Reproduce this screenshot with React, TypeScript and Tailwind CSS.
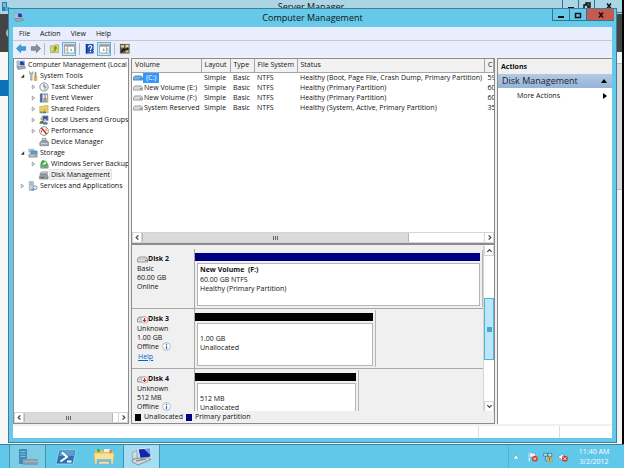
import type { ReactNode } from "react";

type IconName =
  | "computer"
  | "tools"
  | "clock"
  | "events"
  | "share"
  | "users"
  | "perf"
  | "device"
  | "storage"
  | "backup"
  | "disk"
  | "services";

const TREE: { label: string; icon: IconName; level: number; state?: "open" | "closed"; selected?: boolean }[] = [
  { label: "Computer Management (Local", icon: "computer", level: 0 },
  { label: "System Tools", icon: "tools", level: 1, state: "open" },
  { label: "Task Scheduler", icon: "clock", level: 2, state: "closed" },
  { label: "Event Viewer", icon: "events", level: 2, state: "closed" },
  { label: "Shared Folders", icon: "share", level: 2, state: "closed" },
  { label: "Local Users and Groups", icon: "users", level: 2, state: "closed" },
  { label: "Performance", icon: "perf", level: 2, state: "closed" },
  { label: "Device Manager", icon: "device", level: 2 },
  { label: "Storage", icon: "storage", level: 1, state: "open" },
  { label: "Windows Server Backup", icon: "backup", level: 2, state: "closed" },
  { label: "Disk Management", icon: "disk", level: 2, selected: true },
  { label: "Services and Applications", icon: "services", level: 1, state: "closed" },
];

const VOLUMES = [
  { name: "(C:)", status: "Healthy (Boot, Page File, Crash Dump, Primary Partition)", capacity: "59", selected: true },
  { name: "New Volume (E:)", status: "Healthy (Primary Partition)", capacity: "60" },
  { name: "New Volume (F:)", status: "Healthy (Primary Partition)", capacity: "60" },
  { name: "System Reserved", status: "Healthy (System, Active, Primary Partition)", capacity: "35" },
];

const DISKS = [
  {
    name: "Disk 2",
    kind: "Basic",
    size: "60.00 GB",
    online: true,
    width: 100,
    volume: "New Volume  (F:)",
    lines: ["60.00 GB NTFS", "Healthy (Primary Partition)"],
  },
  {
    name: "Disk 3",
    kind: "Unknown",
    size: "1.00 GB",
    online: false,
    help: true,
    width: 63,
    lines: ["1.00 GB", "Unallocated"],
  },
  { name: "Disk 4", kind: "Unknown", size: "512 MB", online: false, width: 57, lines: ["512 MB", "Unallocated"] },
];

export default function App() {
  return (
    <div className="flex h-screen flex-col overflow-hidden bg-black font-['Open_Sans','Noto_Sans',sans-serif] text-[7px] leading-[10px] text-[#111]">
      <main className="relative flex min-h-0 flex-1">
        <ServerManager />
        <ManagementWindow />
      </main>
      <Taskbar />
    </div>
  );
}

function ServerManager() {
  return (
    <div className="absolute inset-y-0 right-[2px] left-0 flex flex-col bg-[#f7f7f7]">
      <div className="flex h-[14px] shrink-0 items-start bg-[#abd5e5]">
        <div className="w-[120px] pt-[2px] pl-[2px]">
          <svg viewBox="0 0 8 9" className="h-[9px] w-2">
            <path d="M0 0h5v9H0z" fill="#2180b3" />
            <path d="M1 2h3M1 4h3" stroke="#d9f2fb" />
            <path d="M3 5h5v4H3z" fill="#4da8ce" />
          </svg>
        </div>
        <div className="flex-1 text-center text-[9px] leading-[14px]">Server Manager</div>
        <div className="flex w-[120px] justify-end">
          <WindowButtons className="h-[13px] w-4" closeClass="h-[13px] w-7" restore />
        </div>
      </div>
      <div className="flex h-[38px] shrink-0 items-center bg-[#444]">
        <span className="ml-[6px] h-[10px] w-[10px] rounded-full border-2 border-[#b6b6b6]" />
      </div>
      <div className="flex flex-1 justify-between">
        <div className="mt-7 h-4 w-2 bg-[#0b70b7]" />
        <div className="w-[5px] bg-[#f4f4f4] pt-[11px]">
          <div className="h-[127px] border-y border-[#b8b8b8] bg-[#dadada]" />
        </div>
      </div>
    </div>
  );
}

function WindowButtons({ className, closeClass, restore }: { className: string; closeClass: string; restore?: boolean }) {
  const edge = "flex items-center justify-center border-b border-l border-[#35748c]";
  return (
    <>
      <button aria-label="Minimize" className={`${edge} ${className}`}>
        <svg viewBox="0 0 8 8" className="h-2 w-2">
          <path d="M1 5h6v2H1z" fill="#111" />
        </svg>
      </button>
      <button aria-label="Maximize" className={`${edge} ${className}`}>
        <svg viewBox="0 0 8 8" className="h-2 w-2" fill="none" stroke="#111" strokeWidth="1.500">
          {restore && <path d="M3 3V1h4v4H5" />}
          <path d={restore ? "M1 3h4v4H1z" : "M1.500 2.500h5v4h-5z"} />
        </svg>
      </button>
      <button
        aria-label="Close"
        className={`${edge} ${closeClass} ${restore ? "" : "bg-[#c7594f]"}`}
      >
        <svg viewBox="0 0 8 8" className="h-2 w-2" stroke="#111" strokeWidth="1.500">
          <path d="M2 1.500 6 6.500M6 1.500 2 6.500" />
        </svg>
      </button>
    </>
  );
}

function ManagementWindow() {
  return (
    <section className="relative mt-2 mr-[7px] mb-px ml-2 flex min-w-0 flex-1 flex-col border border-[#3d7f98] bg-[#66c9ea]">
      <header className="flex h-[18px] shrink-0 items-start">
        <div className="w-[72px] pt-[3px] pl-[5px]">
          <TreeIcon name="computer" />
        </div>
        <h1 className="flex-1 text-center text-[9px] leading-[17px] text-[#111]">Computer Management</h1>
        <div className="mr-[2px] flex w-[70px] justify-end">
          <WindowButtons className="h-3 w-[17px]" closeClass="h-3 w-7" />
        </div>
      </header>
      <div className="mx-1 mb-1 flex min-h-0 flex-1 flex-col bg-[#f0f0f0]">
        <nav className="flex h-[13px] shrink-0 items-center gap-[10px] bg-[#e8eefe] px-[6px]">
          {["File", "Action", "View", "Help"].map((item) => (
            <button key={item}>{item}</button>
          ))}
        </nav>
        <Toolbar />
        <div className="mt-[2px] flex min-h-0 flex-1 gap-[2px]">
          <TreePane />
          <div className="flex min-w-0 flex-1 flex-col border border-[#8c8c8c]">
            <VolumeList />
            <DiskView />
            <Legend />
          </div>
          <ActionsPane />
        </div>
        <footer className="mt-[2px] flex h-3 shrink-0 bg-white">
          <div className="flex-1" />
          <div className="w-[81px] border-l border-[#ddd]" />
          <div className="w-[53px] border-l border-[#ddd]" />
        </footer>
      </div>
    </section>
  );
}

function Toolbar() {
  return (
    <div className="flex h-[16px] shrink-0 items-center gap-[2px] border-t border-[#c9c9c9] bg-[#e8eefe] pl-[2px]">
      <ToolButton label="Back">
        <path d="M0.5 6 5 1.500V4h5.500v4H5v2.500z" fill="#3ba0db" stroke="#2b7cb4" strokeWidth=".7" />
      </ToolButton>
      <ToolButton label="Forward">
        <path d="M11.500 6 7 1.500V4H1.500v4H7v2.500z" fill="#8f8f8f" stroke="#6d6d6d" strokeWidth=".7" />
      </ToolButton>
      <Divider />
      <ToolButton label="Up one level">
        <path d="M1.500 3h3.500l1-1h4.500v8.500h-9z" fill="#e6cf72" stroke="#a88f3e" strokeWidth=".6" />
        <path d="M3 9c2.500 0 3-1 3-3H4.500L7 3l2.500 3H8c0 3-2 4-5 3z" fill="#43b02f" />
      </ToolButton>
      <ToolButton label="Show console tree" pressed>
        <PanelGlyph flip={false} />
      </ToolButton>
      <Divider />
      <ToolButton label="Help topics">
        <path d="M2 1h8.500v10.500H2z" fill="#2f58bd" />
        <path d="M2 1h1.500v10.500H2z" fill="#16347f" />
        <path d="M5 4.500c0-2.500 3.500-2.300 3.500-.2C8.500 5.800 7 5.700 7 7.500" fill="none" stroke="#fff" strokeWidth="1.200" />
        <path d="M6.300 8.600h1.400V10H6.300z" fill="#fff" />
      </ToolButton>
      <ToolButton label="Show action pane" pressed>
        <PanelGlyph flip />
      </ToolButton>
      <Divider />
      <ToolButton label="Disk settings">
        <path d="M1 1h10.500v10.500H1z" fill="#5e5a4d" />
        <path d="M2 2.500h3.500V5H2zM7 2h3.500v3H7z" fill="#e5d9a0" />
        <path d="M2.500 10 5 6.500l1.500 1.500L10 5.500" fill="none" stroke="#111" strokeWidth="1.500" />
        <path d="M7 8h3.500v2.500H7z" fill="#d5b65c" />
      </ToolButton>
    </div>
  );
}

function ToolButton({ label, pressed, children }: { label: string; pressed?: boolean; children: ReactNode }) {
  return (
    <button
      aria-label={label}
      className={`flex h-[14px] items-center justify-center ${pressed ? "w-[14px] border border-[#6aaed2] bg-[#d5e9f8]" : "w-3"}`}
    >
      <svg viewBox="0 0 12 12" className="h-[11px] w-[11px]">
        {children}
      </svg>
    </button>
  );
}

function PanelGlyph({ flip }: { flip: boolean }) {
  return (
    <g>
      <path d="M.5 1.500h11v9.500H.5z" fill="#fff" stroke="#8b8b8b" strokeWidth=".8" />
      <path d="M1 2h10v2H1z" fill="#9a9a9a" />
      <path d={flip ? "M8 4v7" : "M4 4v7"} stroke="#8b8b8b" strokeWidth=".8" />
      <path d={flip ? "M8.500 6.500h2M8.500 8.500h2" : "M1.500 6.500h2M1.500 8.500h2"} stroke="#999" strokeWidth=".8" />
      <path d={flip ? "M4.500 6v3L6.500 7.500z" : "M8.500 6v3L6.500 7.500z"} fill="#4ba855" />
    </g>
  );
}

function Divider() {
  return <span className="mx-px h-3 w-px bg-[#b5b9c4]" />;
}

function TreePane() {
  return (
    <aside className="flex w-[116px] shrink-0 flex-col border border-[#8c8c8c] bg-white">
      <ul className="flex-1 overflow-hidden">
        {TREE.map((node) => (
          <li key={node.label} className={node.level === 2 ? "pl-[17px]" : node.level === 1 ? "pl-[6px]" : "pl-[2px]"}>
            <button className="flex h-[11px] items-center whitespace-nowrap">
              {node.level > 0 && <Twisty state={node.state} />}
              <TreeIcon name={node.icon} />
              <span className={node.selected ? "border border-[#e4e4e4] bg-[#f1f1f1] px-px leading-[9px]" : "ml-[2px]"}>
                {node.label}
              </span>
            </button>
          </li>
        ))}
      </ul>
      <HorizontalScrollbar thumbClass="w-[89px]" />
    </aside>
  );
}

function Twisty({ state }: { state?: "open" | "closed" }) {
  return (
    <svg viewBox="0 0 6 6" className="mr-[3px] h-[6px] w-[5px]">
      {state === "open" && <path d="M5 1v4H1z" fill="#333" />}
      {state === "closed" && <path d="M1.500 .8v4.400L4.500 3z" fill="#fff" stroke="#777" strokeWidth=".8" />}
    </svg>
  );
}

function TreeIcon({ name }: { name: IconName }) {
  return (
    <svg viewBox="0 0 12 12" className="h-[10px] w-[10px] shrink-0">
      {ICONS[name]}
    </svg>
  );
}

const ICONS: Record<IconName, ReactNode> = {
  computer: (
    <>
      <path d="M1 1h3v7H1z" fill="#b8c0c8" stroke="#808a94" strokeWidth=".5" />
      <path d="M4 1.500 10 .8l.8 5.500-6 .7z" fill="#1c3fb5" stroke="#d5dce3" strokeWidth=".8" />
      <path d="m8 1.200 2 3.800.5-4z" fill="#7ea6ee" />
      <path d="M1 8.500 10 7l1.500 3-9 1.500z" fill="#a2abb3" stroke="#68737d" strokeWidth=".6" />
    </>
  ),
  tools: (
    <>
      <path d="M2 .5v3l1 1.200V11h2V4.700L6 3.500v-3L4.800 2.500H3.200z" fill="#b7bdc2" stroke="#767d83" strokeWidth=".5" />
      <path d="M8 1h2v5H8z" fill="#8d9398" />
      <path d="M7.500 6h3v5.500h-3z" fill="#e3b53c" stroke="#a8801c" strokeWidth=".5" />
    </>
  ),
  clock: (
    <>
      <circle cx="6" cy="6" r="5" fill="#f2f5f8" stroke="#8d949b" strokeWidth="1.200" />
      <path d="M6 6v4a4 4 0 0 0 3.500-2z" fill="#e7c887" />
      <path d="M6 2.500V6h3" fill="none" stroke="#36517c" />
    </>
  ),
  events: (
    <>
      <path d="M1.500 1h9v10h-9z" fill="#8fb1d6" stroke="#50729a" strokeWidth=".6" />
      <path d="M1.500 1h2v10h-2z" fill="#4a688f" />
      <path d="M5 2.500h4.500V6H5z" fill="#fff" />
      <path d="M7.300 2.500v4M7.300 7.500v1.500" stroke="#d33a2c" strokeWidth="1.200" />
      <path d="M9 7h2v3H8z" fill="#e9b62e" />
    </>
  ),
  share: (
    <>
      <path d="M.8 3H5l1-1.200h5v8.700H.8z" fill="#ebcc61" stroke="#b29433" strokeWidth=".5" />
      <path d="M4.500 11c0-3 4-3 4 0z" fill="#3f79bd" />
      <circle cx="6.500" cy="7" r="1.400" fill="#dfaa77" />
      <path d="M1 11c0-3 3-3 3.500 0z" fill="#57a74e" />
    </>
  ),
  users: (
    <>
      <path d="M4 1h7v6H4z" fill="#2a56b4" stroke="#a9b4c0" strokeWidth=".8" />
      <path d="M4 9h7v2H4z" fill="#9da7b0" />
      <circle cx="3.500" cy="4.500" r="1.800" fill="#d69c66" />
      <path d="M.5 10.500c0-5 6-5 6 0z" fill="#3f8a4b" />
      <circle cx="7.500" cy="6" r="1.500" fill="#e5b27f" />
      <path d="M5 11.500c0-4.500 5-4.500 5 0z" fill="#5b79a8" />
    </>
  ),
  perf: (
    <>
      <circle cx="6" cy="6" r="5.200" fill="#fff" stroke="#6e6e6e" strokeWidth=".9" />
      <path d="m3 2.500 6 7" stroke="#d4251c" strokeWidth="1.800" />
      <path d="M3 8V5M8.500 3v3" stroke="#d4251c" strokeWidth=".9" />
    </>
  ),
  device: (
    <>
      <path d="M4 1.500h4.500v3H4z" fill="#b6cbe0" stroke="#657b91" strokeWidth=".6" />
      <path d="M1 6.500 3 4.500h7l1.500 2v4H1z" fill="#9ba3aa" stroke="#626a71" strokeWidth=".6" />
      <path d="M2 8h8" stroke="#dfe4e8" />
    </>
  ),
  storage: (
    <>
      <path d="M1 1.500h6V5H1z" fill="#b7d0e6" stroke="#6e8396" strokeWidth=".6" />
      <path d="M3.500 3.500h7.500v3.500H3.500z" fill="#5e9fcf" stroke="#46708f" strokeWidth=".6" />
      <path d="M1 7.500h10v3.500H1z" fill="#b8bdc1" stroke="#6a7075" strokeWidth=".6" />
      <path d="M8.500 9.300H10" stroke="#36b638" />
    </>
  ),
  backup: (
    <>
      <path d="M2 7h9v4H2z" fill="#a3a9ae" stroke="#656b70" strokeWidth=".6" />
      <path d="M5 10C1 8 1 4 4 2.500L3.500 1 7.500 2.500 5 6V4.500C3.500 6 4 8 5 10z" fill="#2fae33" />
      <path d="M7 2c4 2 4 5 1.500 7l.5 1.500L5.500 9 8 6v1.500C9 6 8.500 4 7 2z" fill="#48c73d" stroke="#1f7f24" strokeWidth=".3" />
    </>
  ),
  disk: (
    <>
      <path d="M1 4 3 2h8L9.500 4z" fill="#cfd3d6" stroke="#777" strokeWidth=".5" />
      <path d="M1 4h9.500v2.500H1z" fill="#8b9196" />
      <path d="M.8 7h10v3.800H.8z" fill="#a9afb4" stroke="#4d5256" strokeWidth=".7" />
      <path d="M2 9h5" stroke="#4d5256" />
      <path d="M8.500 9H10" stroke="#39c03a" />
    </>
  ),
  services: (
    <>
      <path d="M1.500 .8h5V11h-5z" fill="#c5d1dc" stroke="#7a8a99" strokeWidth=".6" />
      <path d="M2.500 2.500h3M2.500 4.500h3" stroke="#7a8a99" strokeWidth=".7" />
      <circle cx="8.500" cy="8" r="2.300" fill="#e8eef4" stroke="#5f8fbb" strokeWidth="1.100" />
      <path d="M4 9.500h3v2H4z" fill="#5f8fbb" />
    </>
  ),
};

function HorizontalScrollbar({ thumbClass }: { thumbClass: string }) {
  return (
    <div className="flex h-[11px] shrink-0 border-y border-[#d5d5d5] bg-white">
      <ScrollArrow label="Scroll left" d="M5 1.500 2.500 4 5 6.500" />
      <div className="flex min-w-0 flex-1">
        <div className={`flex items-center justify-center gap-px border-x border-[#b8b8b8] bg-[#dadada] ${thumbClass}`}>
          <span className="h-1 w-px bg-[#666]" />
          <span className="h-1 w-px bg-[#666]" />
          <span className="h-1 w-px bg-[#666]" />
        </div>
      </div>
      <ScrollArrow label="Scroll right" d="M3 1.500 5.500 4 3 6.500" />
    </div>
  );
}

function ScrollArrow({ label, d }: { label: string; d: string }) {
  return (
    <button aria-label={label} className="flex h-[9px] w-[10px] shrink-0 items-center justify-center border-x border-[#d5d5d5] bg-white">
      <svg viewBox="0 0 8 8" className="h-[7px] w-[7px] shrink-0" fill="none" stroke="#444" strokeWidth="1.400">
        <path d={d} />
      </svg>
    </button>
  );
}

function VolumeList() {
  return (
    <div className="flex h-[184px] shrink-0 flex-col bg-white">
      <div className="flex-1 overflow-hidden">
        <table className="w-full table-fixed border-collapse text-left whitespace-nowrap">
          <thead>
            <tr className="h-[13px] border-b border-[#a5a5a5] bg-[#f2f2f2]">
              <HeaderCell className="w-[69px]">Volume</HeaderCell>
              <HeaderCell className="w-[29px]">Layout</HeaderCell>
              <HeaderCell className="w-6">Type</HeaderCell>
              <HeaderCell className="w-[43px]">File System</HeaderCell>
              <HeaderCell>Status</HeaderCell>
              <HeaderCell className="w-[9px]">C</HeaderCell>
            </tr>
          </thead>
          <tbody>
            {VOLUMES.map((volume) => (
              <tr key={volume.name} className="h-[10px]">
                <td className="overflow-hidden p-0">
                  <div className="flex items-center">
                    <DriveGlyph selected={volume.selected} />
                    <span className={volume.selected ? "bg-[#3298fd] px-[3px] text-white" : "pl-px"}>{volume.name}</span>
                  </div>
                </td>
                <td className="p-0 pl-[3px]">Simple</td>
                <td className="p-0 pl-[3px]">Basic</td>
                <td className="p-0 pl-[3px]">NTFS</td>
                <td className="overflow-hidden p-0 pl-[3px]">{volume.status}</td>
                <td className="overflow-hidden p-0 pl-[3px]">{volume.capacity}</td>
              </tr>
            ))}
          </tbody>
        </table>
      </div>
      <HorizontalScrollbar thumbClass="w-[78%]" />
    </div>
  );
}

function HeaderCell({ className = "", children }: { className?: string; children: ReactNode }) {
  return (
    <th className={`overflow-hidden border-r border-[#a5a5a5] p-0 pl-[3px] font-normal ${className}`}>{children}</th>
  );
}

function DriveGlyph({ selected }: { selected?: boolean }) {
  return (
    <svg viewBox="0 0 11 6" className="ml-px h-[6px] w-[10px] shrink-0">
      <path d="M.5 2.500 2 .7h7L10.500 2.500v2.800H.5z" fill={selected ? "#6fb1e3" : "#d9d9d9"} stroke={selected ? "#3578ae" : "#858585"} strokeWidth=".8" />
      <path d="M7.500 3.800h2" stroke="#2c7a38" />
    </svg>
  );
}

function DiskView() {
  return (
    <div className="flex min-h-0 flex-1 border-t-2 border-[#8c8c8c] bg-[#f0f0f0]">
      <div className="min-w-0 flex-1 overflow-hidden pt-1">
        {DISKS.map((disk) => (
          <DiskRow key={disk.name} disk={disk} />
        ))}
      </div>
      <div className="flex w-[11px] shrink-0 flex-col items-center border-l border-[#d5d5d5] bg-white pt-px">
        <ScrollArrow label="Scroll up" d="M1.500 5.500 4 3l2.500 2.500" />
        <div className="flex w-full flex-1 flex-col border-y border-[#d5d5d5] pt-[42px]">
          <div className="flex h-[62px] items-center justify-center border border-[#4fb4d8] bg-[#bde6fd]">
            <span className="h-[5px] w-[5px] bg-[#45a9cc]" />
          </div>
        </div>
        <ScrollArrow label="Scroll down" d="M1.500 2.500 4 5l2.500-2.500" />
      </div>
    </div>
  );
}

function DiskRow({ disk }: { disk: (typeof DISKS)[number] }) {
  return (
    <div className="flex h-[60px] border-b border-[#a8a8a8]">
      <div className="w-[63px] shrink-0 border-r border-[#a8a8a8] pt-[5px] pl-[5px] leading-[9px]">
        <div className="flex items-center leading-[10px] font-bold">
          <DiskGlyph offline={!disk.online} />
          {disk.name}
        </div>
        <div>{disk.kind}</div>
        <div>{disk.size}</div>
        <div className="flex items-center gap-[3px]">
          {disk.online ? "Online" : "Offline"}
          {!disk.online && (
            <svg viewBox="0 0 10 10" className="h-[9px] w-[9px]">
              <circle cx="5" cy="5" r="4.300" fill="#fff" stroke="#a5a5a5" strokeWidth=".8" />
              <path d="M5 2v1.300M5 4.300V8" stroke="#2277c9" strokeWidth="1.400" />
            </svg>
          )}
        </div>
        {disk.help && (
          <a href="#help" className="ml-px leading-[12px] text-[#0066cc] underline">
            Help
          </a>
        )}
      </div>
      <div className="min-w-0 flex-1 py-px">
        <div className="flex h-full flex-col border-r border-[#b5b5b5] pt-[3px] pr-[2px]" style={{ width: `${disk.width}%` }}>
          <div className={`h-2 shrink-0 ${disk.online ? "bg-[#000082]" : "bg-black"}`} />
          <div
            className={`mt-[2px] mb-px ml-[2px] flex-1 border border-[#b5b5b5] bg-white pl-[2px] leading-[9px] ${disk.online ? "pt-px" : "pt-[10px]"}`}
          >
            {disk.volume && <div className="leading-[10px] font-bold whitespace-pre">{disk.volume}</div>}
            {disk.lines.map((line) => (
              <div key={line}>{line}</div>
            ))}
          </div>
        </div>
      </div>
    </div>
  );
}

function DiskGlyph({ offline }: { offline: boolean }) {
  return (
    <svg viewBox="0 0 11 9" className="h-[9px] w-[11px] shrink-0">
      <path d="M.5 4 2 2h7l1.500 2v3H.5z" fill="#e0e0e0" stroke="#777" strokeWidth=".7" />
      <path d="M.5 4h10" stroke="#999" strokeWidth=".5" />
      {offline ? (
        <>
          <circle cx="7.500" cy="5" r="3.200" fill="#fff" stroke="#999" strokeWidth=".6" />
          <path d="M7.500 3v3M6 5l1.500 1.500L9 5" fill="none" stroke="#d42020" strokeWidth="1.100" />
        </>
      ) : (
        <path d="M8 5.500h1.500" stroke="#27a23a" />
      )}
    </svg>
  );
}

function Legend() {
  return (
    <div className="flex h-3 shrink-0 items-center gap-[3px] bg-[#f0f0f0] pl-[3px]">
      <span className="h-[7px] w-[6px] bg-black" />
      Unallocated
      <span className="h-[7px] w-[6px] bg-[#000082]" />
      Primary partition
    </div>
  );
}

function ActionsPane() {
  return (
    <aside className="flex w-[115px] shrink-0 flex-col border-t border-l border-[#8c8c8c] bg-white">
      <h2 className="h-[15px] bg-[#f0f0f0] pl-[3px] leading-[15px] font-bold">Actions</h2>
      <button className="flex h-[14px] items-center justify-between bg-linear-to-b from-[#b3cae3] to-[#94b3d6] pr-[5px] pl-[4px] text-[9px] text-[#223]">
        Disk Management
        <svg viewBox="0 0 6 4" className="h-1 w-[6px]">
          <path d="M0 4h6L3 0z" />
        </svg>
      </button>
      <button className="flex h-[15px] items-center justify-between pr-[5px] pl-[19px]">
        More Actions
        <svg viewBox="0 0 4 6" className="h-[6px] w-1">
          <path d="M0 0v6l4-3z" />
        </svg>
      </button>
    </aside>
  );
}

function Taskbar() {
  return (
    <footer className="flex h-6 shrink-0 border-t border-[#3d7f98] bg-[#62c8ea] pl-[9px]">
      <TaskButton label="Server Manager" className="border-x border-[#4593ae] bg-[#7dcde6]">
        <path d="M3 2h8v15H3z" fill="#3f8cb8" />
        <path d="M4.500 4.500h5M4.500 7h5M4.500 9.500h5" stroke="#7fc0dc" />
        <path d="M7 12h15v6H7z" fill="#84a0ad" />
        <path d="M12 12v-2h5v2M7 14.500h15" fill="none" stroke="#a0bac6" />
      </TaskButton>
      <TaskButton label="PowerShell" className="">
        <path d="M5 3h17l-3 14H2z" fill="#2d73ad" stroke="#a9d8ef" strokeWidth=".8" />
        <path d="M6 4h15l-1 5H5z" fill="#5c9bcb" />
        <path d="m8 5.500 5 4.500-6.500 4.500M13 14.500h4.500" fill="none" stroke="#fff" strokeWidth="1.900" />
      </TaskButton>
      <TaskButton label="File Explorer" className="">
        <path d="M3 3h7l1.500 1.500H21V16H3z" fill="#e9c25c" />
        <path d="M5 2h3v3H5z" fill="#4caf50" />
        <path d="M12 2h6v3h-6z" fill="#f5f0dc" />
        <path d="M17.500 3h2v3h-2z" fill="#e0694a" />
        <path d="M2 6h20l-1 11H3z" fill="#f7e196" stroke="#d6b458" strokeWidth=".6" />
        <path d="M6 18v-4.500h12V18" fill="none" stroke="#71b7de" strokeWidth="2.500" />
      </TaskButton>
      <TaskButton label="Computer Management" className="border-x border-[#4593ae] bg-[#a5ddf2]">
        <path d="M2 6 7 3v9l-4 1z" fill="#d5dbe0" stroke="#7f8a94" strokeWidth=".6" />
        <path d="m8 2 12-1 1 9-11 1.500z" fill="#1026ad" stroke="#dfe5ea" strokeWidth="1.200" />
        <path d="m14 2 6-.5.7 7z" fill="#6f9cf0" />
        <path d="M3 12 18 10.500l3 2-13 5.500-6-3z" fill="#cfd5da" stroke="#6d7780" strokeWidth=".7" />
        <path d="m6 14 10-2" stroke="#6d7780" />
      </TaskButton>
      <div className="flex-1" />
      <div className="flex items-center gap-[5px] border-l border-[#53b3d3] pl-1 text-white">
        <svg viewBox="0 0 6 4" className="mr-1 h-1 w-[6px]">
          <path d="M0 4h6L3 0z" fill="#fff" stroke="#47859c" strokeWidth=".5" />
        </svg>
        <TrayIcon>
          <path d="M1.500 1v10" stroke="#fff" strokeWidth="1.300" />
          <path d="M2 1.500c3-1.500 4 1 7 0v5c-3 1-4-1.500-7 0z" fill="#e9f6fc" stroke="#47859c" strokeWidth=".5" />
          <RedCross />
        </TrayIcon>
        <TrayIcon>
          <path d="M.8 1.500h4.500v3.500H.8zM6 1.500h4.500v4H6zM3 5v5h3" fill="#bfe3f3" stroke="#356f87" strokeWidth=".9" />
          <path d="m8 4.500 3.800 7H4.200z" fill="#f7c83a" stroke="#9b7815" strokeWidth=".5" />
          <path d="M8 7v2M8 9.800v1" stroke="#222" />
        </TrayIcon>
        <TrayIcon>
          <path d="M.8 4.500h2L6 1.500v9L2.800 7.500h-2z" fill="#fff" stroke="#47859c" strokeWidth=".6" />
          <RedCross />
        </TrayIcon>
        <div className="w-[42px] text-center">
          <div>11:40 AM</div>
          <div>3/2/2012</div>
        </div>
        <button aria-label="Show desktop" className="h-full w-1" />
      </div>
    </footer>
  );
}

function TaskButton({ label, className, children }: { label: string; className: string; children: ReactNode }) {
  return (
    <button aria-label={label} className={`mr-px flex w-[37px] items-center justify-center ${className}`}>
      <svg viewBox="0 0 24 20" className="h-5 w-6">
        {children}
      </svg>
    </button>
  );
}

function TrayIcon({ children }: { children: ReactNode }) {
  return (
    <svg viewBox="0 0 12 12" className="h-[10px] w-[10px]">
      {children}
    </svg>
  );
}

function RedCross() {
  return (
    <g>
      <circle cx="8.300" cy="8" r="3.500" fill="#d93a2b" />
      <path d="m6.800 6.500 3 3m0-3-3 3" stroke="#fff" strokeWidth="1.100" />
    </g>
  );
}
